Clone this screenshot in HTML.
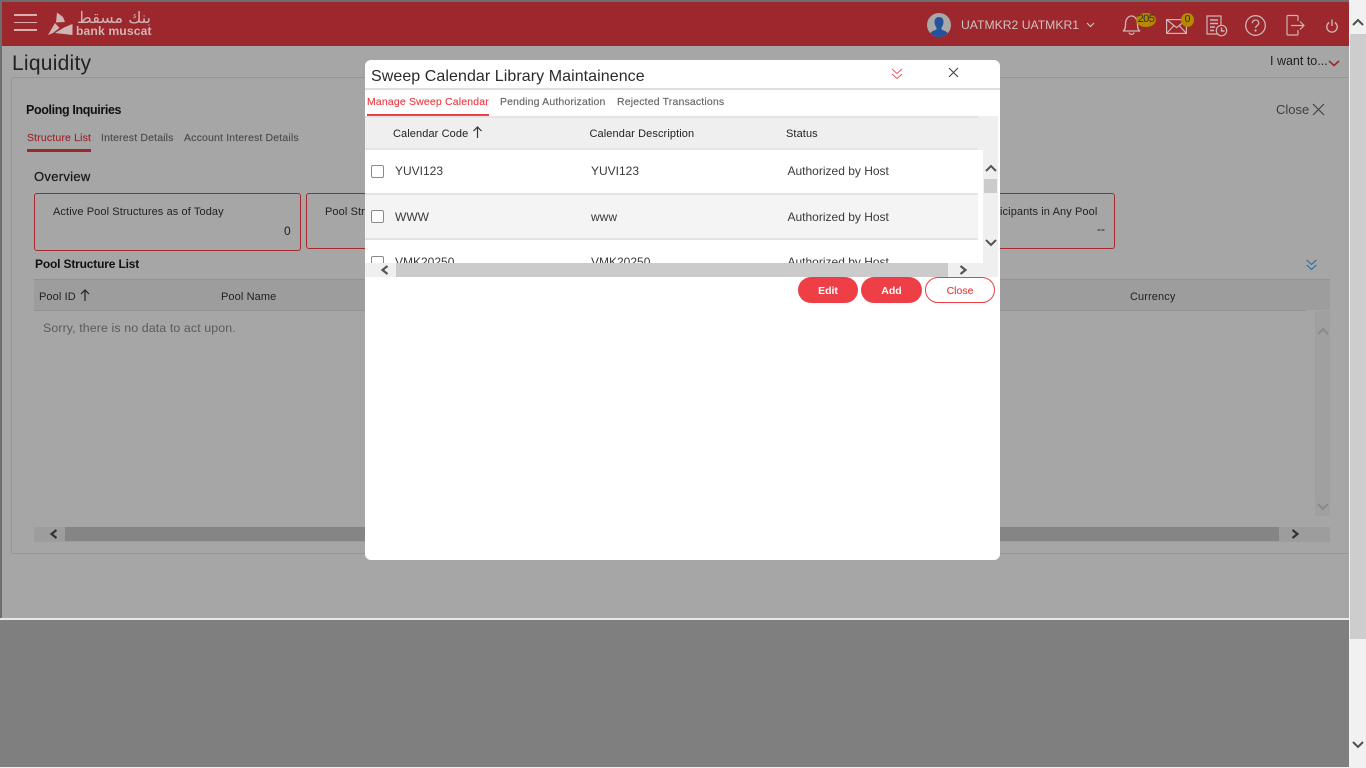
<!DOCTYPE html>
<html lang="en"><head><meta charset="utf-8"><title>Liquidity</title>
<style>
html,body{margin:0;padding:0;width:1366px;height:768px;overflow:hidden;background:#7f7f7f}
body{position:relative;font-family:"Liberation Sans",sans-serif;color:#222}
.a{position:absolute;white-space:nowrap}
.o{letter-spacing:.1px}
.t{letter-spacing:.16px;-webkit-text-stroke:.15px currentColor}
svg{position:absolute;overflow:visible}
</style></head><body>
<!-- page base -->
<div class="a" style="left:0;top:0;width:1349px;height:2px;background:#6e6e6e"></div>
<div class="a" style="left:0;top:2px;width:2px;height:616px;background:#6e6e6e"></div>
<div class="a" style="left:2px;top:46px;width:1347px;height:572px;background:#a6a6a6"></div>
<div class="a" style="left:0;top:618px;width:1349px;height:2px;background:#e8e8e8"></div>
<div class="a" style="left:0;top:620px;width:1349px;height:147px;background:#7f7f7f"></div>
<div class="a" style="left:0;top:767px;width:1366px;height:1px;background:#f1f1f1"></div>

<!-- header -->
<div class="a" style="left:2px;top:2px;width:1347px;height:44px;background:#9c272c"></div>
<div class="a" style="left:14px;top:14px;width:23px;height:2px;background:#d9aeb0"></div>
<div class="a" style="left:14px;top:22px;width:23px;height:1px;background:#d9aeb0"></div>
<div class="a" style="left:14px;top:29px;width:23px;height:2px;background:#d9aeb0"></div>
<svg style="left:48px;top:12px" width="25" height="25" viewBox="0 0 25 25"><path d="M9 .5L15 5 17 10 8 10.500ZM0 23L7 11 11.500 16 5 21ZM24.500 12V23L7 21 16 15.500Z" fill="#d0b5b6"/></svg>
<div class="a" style="left:77px;top:8px;font:16px 'DejaVu Sans',sans-serif;color:#d0b5b6;letter-spacing:1.100px;direction:rtl;width:74px;text-align:left">بنك مسقط</div>
<div class="a" style="left:76px;top:24px;font:bold 12.200px 'Liberation Sans',sans-serif;color:#d0b5b6;letter-spacing:.1px">bank muscat</div>

<svg style="left:927px;top:13px" width="24" height="24" viewBox="0 0 24 24"><circle cx="12" cy="12" r="12" fill="#a8a8a8"/><path d="M12 4c3 0 4.500 2 4.500 5 0 2.500-1 4.500-2 5.500v2l4.500 2c.8.5 1.500 1.500 1.500 2a12 12 0 0 1-17 0c0-.5.700-1.500 1.500-2l4.500-2v-2c-1-1-2-3-2-5.500C7.500 6 9 4 12 4Z" fill="#24539c"/></svg>
<div class="a" style="left:961px;top:18px;font-size:12.200px;color:#cfc0c1">UATMKR2 UATMKR1</div>
<svg style="left:1086px;top:22px" width="9" height="6" viewBox="0 0 9 6"><path d="M1 1l3.500 3.500L8 1" fill="none" stroke="#cfc0c1" stroke-width="1.200"/></svg>
<svg style="left:1122px;top:15px" width="20" height="21" viewBox="0 0 20 21" fill="none" stroke="#cdb5b6" stroke-width="1.300"><path d="M1 16c2-1 2.500-3 2.500-7C3.500 4.500 6 1 9.500 1s6 3.500 6 8c0 4 .5 6 2.500 7Z"/><path d="M7 17.500a2.600 2.600 0 0 0 5 0"/></svg>
<div class="a" style="left:1136px;top:13px;width:20px;height:14px;border-radius:50%;background:#b58900;font-size:11px;line-height:12px;text-align:center;color:#2a2a2a;letter-spacing:-.5px">205</div>
<svg style="left:1166px;top:19px" width="21" height="15" viewBox="0 0 21 15" fill="none" stroke="#cdb5b6" stroke-width="1.200"><rect x=".6" y=".6" width="19.800" height="13.800"/><path d="M.6 .6l10 8 10-8M.6 14.400l7-7.500M20.400 14.400l-7-7.500"/></svg>
<div class="a" style="left:1181px;top:13px;width:13px;height:14px;border-radius:50%;background:#b58900;font-size:10px;line-height:13px;text-align:center;color:#2a2a2a">0</div>
<svg style="left:1206px;top:15px" width="22" height="22" viewBox="0 0 22 22" fill="none" stroke="#cdb5b6" stroke-width="1.200"><path d="M12 19H1V1h14v9"/><path d="M4 5h8M4 8.500h8M4 12h5M4 15.500h4" stroke-width="1.400"/><circle cx="15.500" cy="15.500" r="5.200"/><path d="M15.500 12.500v3.500h3" stroke-width="1.400"/></svg>
<svg style="left:1245px;top:15px" width="21" height="21" viewBox="0 0 21 21" fill="none" stroke="#cdb5b6" stroke-width="1.300"><circle cx="10.500" cy="10.500" r="9.800"/><path d="M7.300 8.200c0-2 1.500-3.200 3.300-3.200s3.200 1.200 3.200 3c0 2.500-3.200 2.500-3.200 5"/><circle cx="10.500" cy="15.500" r=".5" fill="#cdb5b6"/></svg>
<svg style="left:1286px;top:15px" width="19" height="21" viewBox="0 0 19 21" fill="none" stroke="#cdb5b6" stroke-width="1.200"><path d="M12 6V1.500a1 1 0 0 0-1-1H2a1 1 0 0 0-1 1v17.500a1 1 0 0 0 1 1h9a1 1 0 0 0 1-1V15"/><path d="M5 10.500h13M14 6.500l4 4-4 4"/></svg>
<svg style="left:1326px;top:19px" width="12" height="14" viewBox="0 0 12 14" fill="none" stroke="#cdb5b6" stroke-width="1.400"><path d="M3.200 3.500a5.200 5.200 0 1 0 5.600 0M6 .5v6.500"/></svg>

<!-- background content -->
<div class="a" style="left:12px;top:51px;font-size:21px;line-height:26px;color:#222;letter-spacing:.25px">Liquidity</div>
<div class="a" style="left:1270px;top:54px;font-size:12.500px;color:#1f1f1f">I want to...</div>
<svg style="left:1328px;top:60px" width="12" height="7" viewBox="0 0 12 7"><path d="M1 1l5 4.500L11 1" fill="none" stroke="#9c272c" stroke-width="1.600"/></svg>
<div class="a" style="left:11px;top:77px;width:1338px;height:475px;border:1px solid #959595;border-right:0;border-radius:3px 0 0 3px"></div>
<div class="a" style="left:26px;top:103px;font-size:12.500px;font-weight:bold;color:#111;letter-spacing:-.37px">Pooling Inquiries</div>
<div class="a t" style="left:27px;top:132px;font-size:10.500px;color:#9c272c">Structure List</div>
<div class="a" style="left:27px;top:149px;width:64px;height:3px;background:#9c272c"></div>
<div class="a t" style="left:101px;top:132px;font-size:10.500px;color:#4d4d4d">Interest Details</div>
<div class="a t" style="left:184px;top:132px;font-size:10.500px;color:#4d4d4d">Account Interest Details</div>
<div class="a" style="left:1276px;top:102px;font-size:13px;color:#3f3f3f">Close</div>
<svg style="left:1312px;top:103px" width="13" height="13" viewBox="0 0 13 13"><path d="M1 1l11 11M12 1L1 12" stroke="#3f3f3f" stroke-width="1.100"/></svg>
<div class="a" style="left:34px;top:169px;font-size:13px;color:#1a1a1a;letter-spacing:.3px;-webkit-text-stroke:.25px #1a1a1a">Overview</div>
<div class="a" style="left:34px;top:193px;width:265px;height:56px;border:1px solid #a52a2e;border-radius:3px"></div>
<div class="a o" style="left:53px;top:206px;font-size:11px;color:#222">Active Pool Structures as of Today</div>
<div class="a" style="left:284px;top:224px;font-size:12px;color:#222">0</div>
<div class="a" style="left:306px;top:193px;width:100px;height:54px;border:1px solid #a52a2e;border-radius:3px"></div>
<div class="a o" style="left:325px;top:206px;font-size:11px;color:#222">Pool Str</div>
<div class="a" style="left:960px;top:193px;width:153px;height:54px;border:1px solid #a52a2e;border-radius:3px"></div>
<div class="a o" style="left:1000px;top:206px;font-size:11px;color:#222">icipants in Any Pool</div>
<div class="a" style="left:1097px;top:222px;font-size:12px;color:#222">--</div>
<div class="a" style="left:35px;top:257px;font-size:12px;font-weight:bold;color:#111;letter-spacing:-.17px">Pool Structure List</div>
<svg style="left:1306px;top:259px" width="11" height="12" viewBox="0 0 11 12"><path d="M.7 1l4.800 4.500L10.300 1M.7 6l4.800 4.500L10.300 6" fill="none" stroke="#1d6b9b" stroke-width="1"/></svg>
<div class="a" style="left:34px;top:279px;width:1296px;height:31px;background:#9d9d9d;border-top:1px solid #929292;box-sizing:border-box"></div>
<div class="a" style="left:34px;top:310px;width:1272px;height:1px;background:#929292"></div>
<div class="a" style="left:1315px;top:311px;width:15px;height:205px;background:#a0a0a0"></div>
<div class="a o" style="left:39px;top:291px;font-size:11px;color:#222">Pool ID</div>
<svg style="left:80px;top:289px" width="10" height="12" viewBox="0 0 10 12"><path d="M5 12V1M1 5l4-4 4 4" fill="none" stroke="#222" stroke-width="1.200"/></svg>
<div class="a o" style="left:221px;top:291px;font-size:11px;color:#222">Pool Name</div>
<div class="a o" style="left:1130px;top:291px;font-size:11px;color:#222">Currency</div>
<div class="a" style="left:43px;top:321px;font-size:12.400px;color:#5b5b5b;letter-spacing:.1px">Sorry, there is no data to act upon.</div>
<svg style="left:1317px;top:327px" width="12" height="8" viewBox="0 0 12 8"><path d="M1 7l5-5 5 5" fill="none" stroke="#8a8a8a" stroke-width="2"/></svg>
<svg style="left:1317px;top:503px" width="12" height="8" viewBox="0 0 12 8"><path d="M1 1l5 5 5-5" fill="none" stroke="#8a8a8a" stroke-width="2"/></svg>
<div class="a" style="left:34px;top:527px;width:1296px;height:15px;background:#9d9d9d"></div>
<div class="a" style="left:65px;top:527px;width:1214px;height:14px;background:#858585"></div>
<svg style="left:49px;top:529px" width="9" height="10" viewBox="0 0 9 10"><path d="M7.500 1L2.500 5l5 4" fill="none" stroke="#333" stroke-width="2.200"/></svg>
<svg style="left:1291px;top:529px" width="9" height="10" viewBox="0 0 9 10"><path d="M1.500 1L6.500 5l-5 4" fill="none" stroke="#333" stroke-width="2.200"/></svg>

<!-- browser scrollbar -->
<div class="a" style="left:1349px;top:0;width:17px;height:768px;background:#f1f1f1"></div>
<div class="a" style="left:1350px;top:34px;width:16px;height:605px;background:#cdcdcd"></div>
<svg style="left:1352px;top:18px" width="12" height="8" viewBox="0 0 12 8"><path d="M1 7l5-5 5 5" fill="none" stroke="#505050" stroke-width="2"/></svg>
<svg style="left:1352px;top:741px" width="12" height="8" viewBox="0 0 12 8"><path d="M1 1l5 5 5-5" fill="none" stroke="#505050" stroke-width="2"/></svg>

<!-- modal -->
<div class="a" style="left:365px;top:60px;width:635px;height:500px;background:#fff;border-radius:6px;overflow:hidden">
  <div class="a" style="left:6px;top:7px;font-size:16px;line-height:20px;color:#2a2a2a;letter-spacing:.07px">Sweep Calendar Library Maintainence</div>
  <div class="a" style="left:0;top:28px;width:635px;height:2px;background:#dedede"></div>
  <svg style="left:526px;top:8px" width="12" height="12" viewBox="0 0 12 12"><path d="M1 1l5 4.500L11 1M1 6l5 4.500L11 6" fill="none" stroke="#f0545a" stroke-width="1"/></svg>
  <svg style="left:583px;top:7px" width="11" height="11" viewBox="0 0 11 11"><path d="M1 1l9 9M10 1l-9 9" stroke="#444" stroke-width="1.100"/></svg>
  <div class="a t" style="left:2px;top:36px;font-size:10.500px;color:#ee3f47">Manage Sweep Calendar</div>
  <div class="a" style="left:2px;top:54px;width:122px;height:3px;background:#ee3f47"></div>
  <div class="a t" style="left:135px;top:36px;font-size:10.500px;color:#666">Pending Authorization</div>
  <div class="a t" style="left:252px;top:36px;font-size:10.500px;color:#666">Rejected Transactions</div>

  <div class="a" style="left:0;top:56px;width:633px;height:147px;background:#efefef"></div>
  <div class="a" style="left:0;top:56px;width:613px;height:2px;background:#e4e4e4"></div>
  <div class="a" style="left:0;top:88px;width:613px;height:2px;background:#e4e4e4"></div>
  <div class="a o" style="left:28px;top:68px;font-size:11px;color:#222">Calendar Code</div>
  <svg style="left:107px;top:66px" width="11" height="12" viewBox="0 0 11 12"><path d="M5.500 12V1M1.500 5l4-4 4 4" fill="none" stroke="#333" stroke-width="1.200"/></svg>
  <div class="a o" style="left:224.500px;top:68px;font-size:11px;color:#222">Calendar Description</div>
  <div class="a o" style="left:421px;top:68px;font-size:11px;color:#222">Status</div>

  <div class="a" style="left:0;top:90px;width:618px;height:113px;background:#fff;overflow:hidden">
    <div class="a" style="left:6px;top:15px;width:11px;height:11px;border:1px solid #8a8a8a;border-radius:2px"></div>
    <div class="a" style="left:30px;top:14px;font-size:12px;color:#3a3a3a">YUVI123</div>
    <div class="a" style="left:226px;top:14px;font-size:12px;color:#3a3a3a">YUVI123</div>
    <div class="a" style="left:422.500px;top:14px;font-size:12px;color:#3a3a3a">Authorized by Host</div>
    <div class="a" style="left:0;top:43px;width:613px;height:47px;background:#f4f4f4;border-top:2px solid #e4e4e4;border-bottom:2px solid #e4e4e4;box-sizing:border-box"></div>
    <div class="a" style="left:6px;top:60px;width:11px;height:11px;border:1px solid #8a8a8a;border-radius:2px;background:#fff"></div>
    <div class="a" style="left:30px;top:60px;font-size:12px;color:#3a3a3a">WWW</div>
    <div class="a" style="left:226px;top:60px;font-size:12px;color:#3a3a3a">www</div>
    <div class="a" style="left:422.500px;top:60px;font-size:12px;color:#3a3a3a">Authorized by Host</div>
    <div class="a" style="left:6px;top:106px;width:11px;height:11px;border:1px solid #8a8a8a;border-radius:2px"></div>
    <div class="a" style="left:30px;top:105px;font-size:12px;color:#3a3a3a">VMK20250</div>
    <div class="a" style="left:226px;top:105px;font-size:12px;color:#3a3a3a">VMK20250</div>
    <div class="a" style="left:422.500px;top:105px;font-size:12px;color:#3a3a3a">Authorized by Host</div>
  </div>
  <svg style="left:620px;top:104px" width="12" height="8" viewBox="0 0 12 8"><path d="M1 7l5-5 5 5" fill="none" stroke="#555" stroke-width="2"/></svg>
  <div class="a" style="left:619px;top:119px;width:13px;height:14px;background:#cbcbcb"></div>
  <svg style="left:620px;top:179px" width="12" height="8" viewBox="0 0 12 8"><path d="M1 1l5 5 5-5" fill="none" stroke="#555" stroke-width="2"/></svg>
  <div class="a" style="left:0;top:203px;width:633px;height:14px;background:#efefef"></div>
  <div class="a" style="left:31px;top:203px;width:552px;height:14px;background:#cbcbcb"></div>
  <svg style="left:15px;top:205px" width="9" height="10" viewBox="0 0 9 10"><path d="M7.500 1L2.500 5l5 4" fill="none" stroke="#555" stroke-width="2.200"/></svg>
  <svg style="left:594px;top:205px" width="9" height="10" viewBox="0 0 9 10"><path d="M1.500 1L6.500 5l-5 4" fill="none" stroke="#555" stroke-width="2.200"/></svg>

  <div class="a" style="left:433px;top:217px;width:60px;height:26px;border-radius:13px;background:#ee3f47;color:#fff;font-size:10.500px;line-height:29px;text-align:center;font-weight:bold">Edit</div>
  <div class="a" style="left:496px;top:217px;width:61px;height:26px;border-radius:13px;background:#ee3f47;color:#fff;font-size:10.500px;line-height:29px;text-align:center;font-weight:bold">Add</div>
  <div class="a" style="left:560px;top:217px;width:68px;height:24px;border-radius:13px;border:1px solid #ee3f47;background:#fff;color:#ee3f47;font-size:10.500px;line-height:27px;text-align:center;-webkit-text-stroke:.15px #ee3f47">Close</div>
</div>
</body></html>
